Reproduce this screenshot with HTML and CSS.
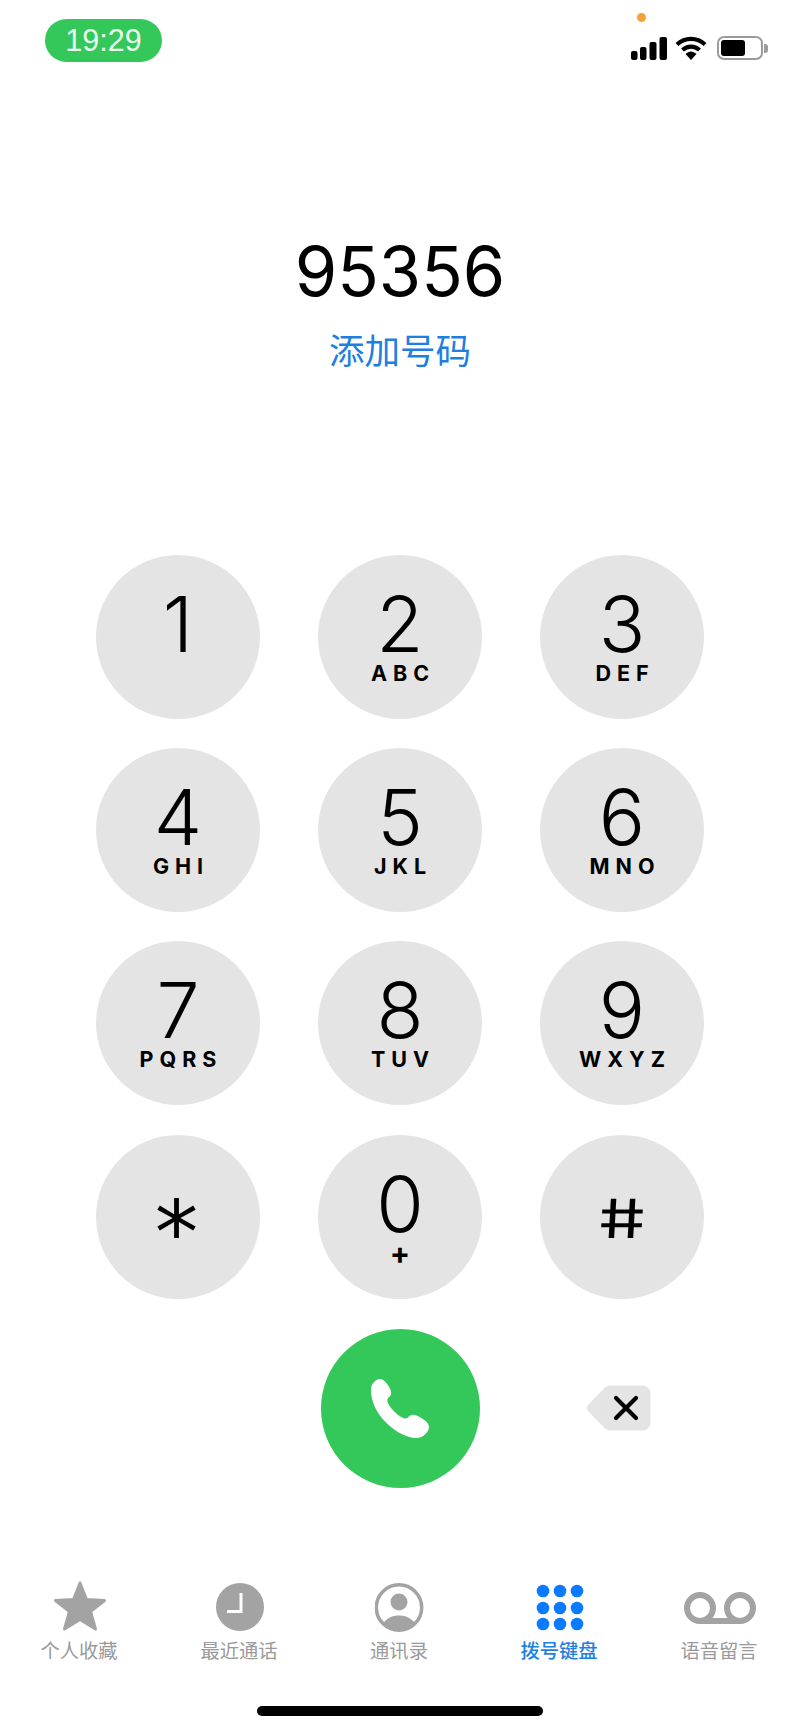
FILE: index.html
```html
<!DOCTYPE html>
<html lang="zh-CN">
<head>
<meta charset="utf-8">
<title>拨号键盘</title>
<link rel="stylesheet" href="styles.css">
</head>
<body>
<div class="page">
  <header class="status">
    <div class="time-pill">19:29</div>
    <div class="status-icons">
      <svg class="signal" width="36" height="23" viewBox="0 0 36 23"><rect x="0" y="14" width="6.500" height="9" rx="2"/><rect x="9" y="10" width="6.500" height="13" rx="2"/><rect x="18.500" y="5" width="7" height="18" rx="2"/><rect x="28.500" y="0" width="7.500" height="23" rx="2"/></svg>
      <svg class="wifi" width="32" height="24" viewBox="0 0 32 24"><path d="M2 8.500C10 1 22 1 30 8.500M7.500 14C12.500 9.500 19.500 9.500 24.500 14" fill="none" stroke="#000" stroke-width="4.200"/><path d="M10.500 18C14 14.500 18 14.500 21.500 18L16 24Z"/></svg>
      <div class="battery"><div class="battery-fill"></div></div>
      <div class="battery-nub"></div>
    </div>
    <div class="privacy-dot"></div>
  </header>

  <section class="entry">
    <div class="number">95356</div>
    <div class="add">添加号码</div>
  </section>

  <main class="pad">
    <div class="key"><span class="digit">1</span></div>
    <div class="key"><span class="digit">2</span><span class="letters">ABC</span></div>
    <div class="key"><span class="digit">3</span><span class="letters">DEF</span></div>
    <div class="key"><span class="digit">4</span><span class="letters">GHI</span></div>
    <div class="key"><span class="digit">5</span><span class="letters">JKL</span></div>
    <div class="key"><span class="digit">6</span><span class="letters">MNO</span></div>
    <div class="key"><span class="digit">7</span><span class="letters">PQRS</span></div>
    <div class="key"><span class="digit">8</span><span class="letters">TUV</span></div>
    <div class="key"><span class="digit">9</span><span class="letters">WXYZ</span></div>
    <div class="key"><span class="star">*</span></div>
    <div class="key"><span class="digit">0</span><span class="plus">+</span></div>
    <div class="key"><span class="hash">#</span></div>
    <div class="spacer"></div>
    <div class="call">
      <svg width="58" height="59" viewBox="7 2 53 54"><path fill="#fff" d="M7 13C6 8 11 2 15 2C18 2 21 5 24 10C26 14 26 17 23 19C21.500 20.500 21.500 22 23 25C26 30 30 34 35 37C38 38.500 39.500 38.500 41 37C43 34 46 34 50 36C56 39 60 42 60 46C60 51 54 56 49 56C38 56 26 48 18 39C11 31 7 21 7 13Z"/></svg>
    </div>
    <div class="delete-cell">
      <svg width="65" height="46" viewBox="0 0 65 46"><path fill="#e4e4e4" d="M24 0.500H56C61 0.500 64.500 4 64.500 9V37C64.500 42 61 45.500 56 45.500H24C21.500 45.500 20 44.500 18.500 43L2 26C0.500 24 0.500 22 2 20L18.500 3C20 1.500 21.500 0.500 24 0.500Z"/><path d="M30 13L50 33M50 13L30 33" fill="none" stroke="#000" stroke-width="4.200" stroke-linecap="round"/></svg>
    </div>
  </main>

  <nav class="tabs">
    <div class="tab">
      <svg width="56" height="52" viewBox="0 0 56 52"><path fill="#a3a3a3" stroke="#a3a3a3" stroke-width="3" stroke-linejoin="round" d="M28 3L34.500 19.500L52.500 20.500L38.500 31.500L43.500 49L28 39.500L12.500 49L17.500 31.500L3.500 20.500L21.500 19.500Z"/></svg>
      <span class="tab-label">个人收藏</span>
    </div>
    <div class="tab">
      <svg width="50" height="52" viewBox="0 0 50 52"><circle cx="25" cy="27" r="24" fill="#a3a3a3"/><path d="M26 13V31.500H12" fill="none" stroke="#fff" stroke-width="3"/></svg>
      <span class="tab-label">最近通话</span>
    </div>
    <div class="tab">
      <svg width="50" height="52" viewBox="0 0 50 52"><circle cx="24" cy="27.500" r="22.700" fill="#fff" stroke="#a3a3a3" stroke-width="3.500"/><circle cx="24" cy="22" r="8.500" fill="#a3a3a3"/><path fill="#a3a3a3" d="M7.500 44C11.500 38 17.500 35.500 24 35.500C30.500 35.500 36.500 38 40.500 44C36.500 48.500 30.500 50.500 24 50.500C17.500 50.500 11.500 48.500 7.500 44Z"/></svg>
      <span class="tab-label">通讯录</span>
    </div>
    <div class="tab tab-active">
      <svg width="50" height="52" viewBox="0 0 50 52"><g fill="#0a7aff"><circle cx="8" cy="11" r="6.300"/><circle cx="25" cy="11" r="6.300"/><circle cx="42" cy="11" r="6.300"/><circle cx="8" cy="28" r="6.300"/><circle cx="25" cy="28" r="6.300"/><circle cx="42" cy="28" r="6.300"/><circle cx="8" cy="44" r="6.300"/><circle cx="25" cy="44" r="6.300"/><circle cx="42" cy="44" r="6.300"/></g></svg>
      <span class="tab-label">拨号键盘</span>
    </div>
    <div class="tab">
      <svg width="74" height="52" viewBox="0 0 74 52"><g fill="none" stroke="#a3a3a3" stroke-width="6"><circle cx="17" cy="28" r="13"/><circle cx="57" cy="28" r="13"/><path d="M17 41H57"/></g></svg>
      <span class="tab-label">语音留言</span>
    </div>
  </nav>
  <div class="home-bar"></div>
</div>
</body>
</html>
```

FILE: styles.css
```css
* { box-sizing: border-box; }
html, body { margin: 0; padding: 0; background: #fff; }
body { font-family: Inter, "Noto Sans CJK SC", sans-serif; color: #000; }
.page { position: relative; width: 800px; height: 1732px; overflow: hidden; }

.status { display: flex; justify-content: space-between; align-items: flex-start; height: 70px; padding: 19px 32px 0 45px; }
.time-pill { width: 117px; height: 43px; border-radius: 22px; background: #34c85a; color: #e9fbee; font: 400 30.500px/43px "Liberation Sans", sans-serif; text-align: center; }
.status-icons { display: flex; align-items: center; margin-top: 17px; height: 24px; }
.signal { margin-right: 8px; }
.wifi { margin-right: 10px; }
.battery { width: 46px; height: 24px; border: 2px solid #9b9b9b; border-radius: 7px; padding: 2px; background: #fff; }
.battery-fill { width: 24px; height: 100%; background: #000; border-radius: 3px; }
.battery-nub { width: 4px; height: 9px; margin-left: 1px; background: #9b9b9b; border-radius: 0 3px 3px 0; }
.privacy-dot { position: absolute; left: 637px; top: 13px; width: 9px; height: 9px; border-radius: 50%; background: #f4a33b; }

.entry { display: flex; flex-direction: column; align-items: center; height: 484.500px; padding-top: 160px; }
.number { font-size: 68.500px; line-height: 84px; font-weight: 400; }
.add { font-size: 35.500px; line-height: 48px; margin-top: 11px; color: #1e7fe0; font-family: "Noto Sans CJK SC", sans-serif; }

.pad { display: grid; grid-template-columns: repeat(3, 164px); column-gap: 58px; row-gap: 29.400px; padding-left: 96px; }
.key { width: 164px; height: 164px; border-radius: 50%; background: #e4e4e4; display: flex; flex-direction: column; align-items: center; padding-top: 32px; }
.digit { font-size: 77px; line-height: 74px; font-weight: 350; height: 74px; }
.letters { font-size: 21.500px; line-height: 24px; font-weight: 700; letter-spacing: 6px; margin-right: -6px; }
.plus { font-size: 30px; line-height: 24px; font-weight: 700; }
.star { font: 400 87px/110px "DejaVu Sans", sans-serif; margin: 11px 3px 0 0; }
.hash { font-size: 54px; line-height: 104px; font-weight: 400; transform: scaleX(1.38) skewX(7deg); }

.spacer { height: 158px; }
.call { grid-column: 2; justify-self: center; width: 159px; height: 159px; border-radius: 50%; background: #34c85a; display: flex; align-items: center; justify-content: center; margin-top: 0.500px; }
.delete-cell { display: flex; align-items: center; padding-left: 46px; margin-top: 1px; }

.tabs { display: grid; grid-template-columns: repeat(5, 160px); margin-top: 92.500px; }
.tab { display: flex; flex-direction: column; align-items: center; color: #9a9a9a; }
.tab-label { font-family: "Noto Sans CJK SC", sans-serif; font-size: 19.300px; line-height: 26px; margin: 5px 2px 0 0; }
.tab-active { color: #1e7fe0; }
.tab-active .tab-label { font-weight: 500; }

.home-bar { position: absolute; left: 257px; top: 1706px; width: 286px; height: 10px; border-radius: 5px; background: #000; }
```
